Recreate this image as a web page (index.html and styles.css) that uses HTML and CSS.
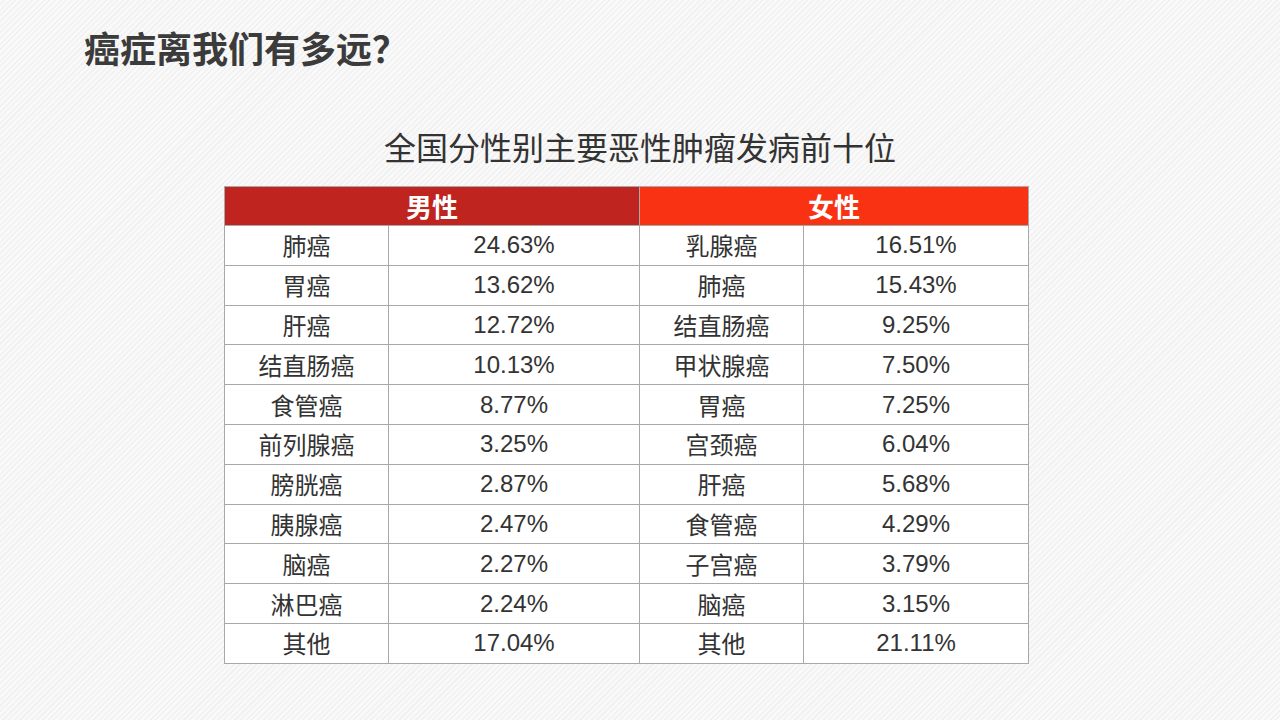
FILE: index.html
```html
<!DOCTYPE html>
<html lang="zh">
<head>
<meta charset="utf-8">
<title>癌症离我们有多远？</title>
<link rel="stylesheet" href="styles.css">
</head>
<body>
<div class="slide">
  <h1 class="title">癌症离我们有多远？</h1>
  <h2 class="subtitle">全国分性别主要恶性肿瘤发病前十位</h2>
  <div class="table-wrap">
    <table class="data">
      <colgroup>
        <col class="c1"><col class="c2"><col class="c3"><col class="c4">
      </colgroup>
      <thead>
        <tr>
          <th colspan="2" class="male">男性</th>
          <th colspan="2" class="female">女性</th>
        </tr>
      </thead>
      <tbody>
        <tr><td>肺癌</td><td class="num">24.63%</td><td>乳腺癌</td><td class="num">16.51%</td></tr>
        <tr><td>胃癌</td><td class="num">13.62%</td><td>肺癌</td><td class="num">15.43%</td></tr>
        <tr><td>肝癌</td><td class="num">12.72%</td><td>结直肠癌</td><td class="num">9.25%</td></tr>
        <tr><td>结直肠癌</td><td class="num">10.13%</td><td>甲状腺癌</td><td class="num">7.50%</td></tr>
        <tr><td>食管癌</td><td class="num">8.77%</td><td>胃癌</td><td class="num">7.25%</td></tr>
        <tr><td>前列腺癌</td><td class="num">3.25%</td><td>宫颈癌</td><td class="num">6.04%</td></tr>
        <tr><td>膀胱癌</td><td class="num">2.87%</td><td>肝癌</td><td class="num">5.68%</td></tr>
        <tr><td>胰腺癌</td><td class="num">2.47%</td><td>食管癌</td><td class="num">4.29%</td></tr>
        <tr><td>脑癌</td><td class="num">2.27%</td><td>子宫癌</td><td class="num">3.79%</td></tr>
        <tr><td>淋巴癌</td><td class="num">2.24%</td><td>脑癌</td><td class="num">3.15%</td></tr>
        <tr><td>其他</td><td class="num">17.04%</td><td>其他</td><td class="num">21.11%</td></tr>
      </tbody>
    </table>
  </div>
</div>
</body>
</html>
```

FILE: styles.css
```css
html, body {
  margin: 0;
  padding: 0;
}
body {
  width: 1280px;
  height: 720px;
  overflow: hidden;
  background-color: #f7f7f7;
  background-image: repeating-linear-gradient(135deg, #f9f9f9 0px, #f9f9f9 2.5px, #f1f1f1 2.5px, #f1f1f1 4px);
  font-family: "Liberation Sans", "Noto Sans CJK SC", sans-serif;
  color: #333333;
}
.slide {
  display: flex;
  flex-direction: column;
}
.title {
  margin: 0;
  padding: 25px 0 0 84px;
  font-family: "Noto Sans CJK SC", sans-serif;
  font-weight: 700;
  font-size: 36px;
  line-height: 44px;
  color: #3b3b3b;
  letter-spacing: 0;
}
.subtitle {
  margin: 0;
  padding-top: 57px;
  text-align: center;
  font-family: "Noto Sans CJK SC", sans-serif;
  font-weight: 400;
  font-size: 32px;
  line-height: 40px;
  color: #333333;
}
.table-wrap {
  padding: 20px 0 0 224px;
}
.data {
  border-collapse: collapse;
  table-layout: fixed;
  width: 804px;
  background: #ffffff;
}
.c1 { width: 164px; }
.c2 { width: 251px; }
.c3 { width: 164px; }
.c4 { width: 225px; }
.data th {
  height: 38px;
  padding: 0;
  font-family: "Noto Sans CJK SC", sans-serif;
  font-weight: 700;
  font-size: 26px;
  color: #ffffff;
  border: 1px solid #a8a8a8;
  text-align: center;
  vertical-align: middle;
  line-height: 1;
}
.data th.male { background: #c0241e; }
.data th.female { background: #fa3214; }
.data td {
  height: 38.8px;
  padding: 0;
  border: 1px solid #a8a8a8;
  text-align: center;
  vertical-align: middle;
  font-family: "Noto Sans CJK SC", sans-serif;
  font-size: 24px;
  line-height: 1;
  color: #333333;
}
.data td.num {
  font-family: "Liberation Sans", "Noto Sans CJK SC", sans-serif;
  font-size: 24px;
}
```
